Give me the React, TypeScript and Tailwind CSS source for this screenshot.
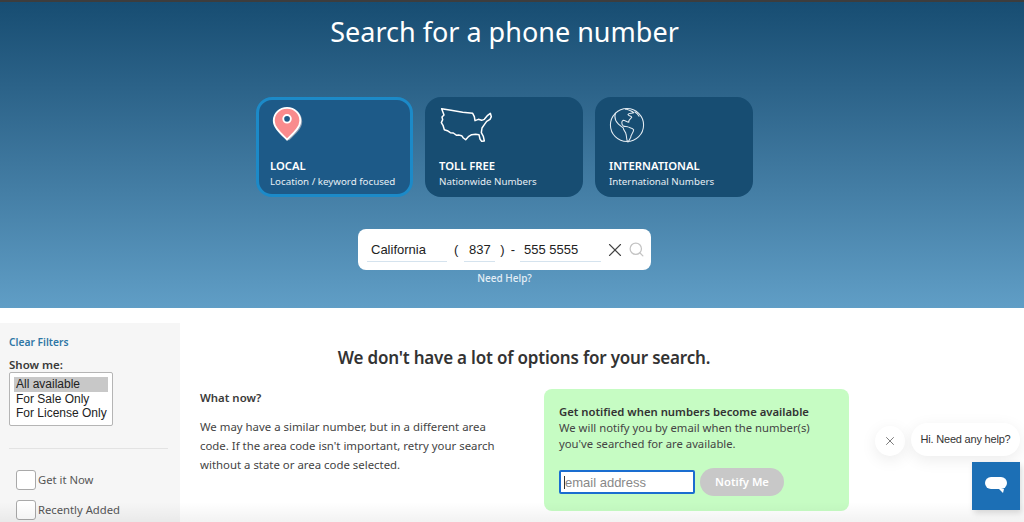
import { Search, X } from "lucide-react";

const sans = "font-['Noto_Sans',sans-serif]";
const arial = "font-['Liberation_Sans',Arial,sans-serif]";

const PinIcon = () => (
  <svg width="34" height="36" viewBox="0 0 34 38" className="ml-[1px]">
    <path d="M18 3c8 0 14 6 14 13.500 0 7-7 13-14 20-7-7-14-13-14-20C4 9 10 3 18 3z" fill="#8a9bb0" />
    <path
      d="M16 2c8 0 14 6 14 13.500 0 7-7 13-14 20-7-7-14-13-14-20C2 8 8 2 16 2z"
      fill="#f98b8d"
      stroke="#fff"
      strokeWidth="2"
    />
    <circle cx="16" cy="13.500" r="4" fill="#1d5a88" stroke="#fff" strokeWidth="2" />
  </svg>
);

const UsaIcon = () => (
  <svg width="60" height="38" viewBox="20 30 180 114" fill="none" className="-ml-[4px]">
    <path
      d="M40 38l28 5 35 6 30 3 5 10 2 12 10-4 10 3 8-3 10-12 8-6 3 10-4 8-10 6-7 10-7 10-2 14 6 11 3 14-8 1-5-7-3-13-10-1-12 1-10 6-8 9-7-5-5-7-9-2-6 1-10-7-9-1-9-6-9-3-4-13-5-8 4-9-2-8 6-6z"
      stroke="#fff"
      strokeWidth="4.500"
      strokeLinejoin="round"
    />
  </svg>
);

const GlobeIcon = () => (
  <svg width="36" height="36" viewBox="0 0 38 38" fill="none" stroke="#e4ecf2" strokeWidth="1.100" strokeLinejoin="round" className="mt-[1px]">
    <circle cx="19" cy="19" r="17.500" />
    <path d="M17 2c3 1 7 2 9 4-2 1-5 0-6 2 1 2 4 1 4 3-2 2-4 3-3 5-2 0-4-2-6-2-2 1-2 4 0 6 2 1 4 0 5 1 2 1 5 1 6 3 0 3-3 5-3 8-1 2-2 4-3 5-2-2-1-5-2-8 0-3-3-4-3-7-3-2-6-4-8-8-1-3-1-6 0-8" />
    <path d="M27 5c2 1 4 3 5 5" />
  </svg>
);

const ChoiceCard = ({
  title,
  sub,
  icon,
  active,
}: {
  title: string;
  sub: string;
  icon: React.ReactNode;
  active?: boolean;
}) => (
  <div
    className={
      active
        ? "flex h-[100px] w-[157px] flex-col rounded-2xl border-[3px] border-[#1c8ac8] bg-[#1d5a88] px-[11px] pt-[6px] text-white"
        : "flex h-[100px] w-[158px] flex-col rounded-2xl bg-[#174d72] px-[14px] pt-[9px] text-white"
    }
  >
    <div className="h-[52px]">{icon}</div>
    <div className="text-[11.250px] leading-[16px] font-semibold">{title}</div>
    <div className="text-[9.750px] leading-[15px] text-[#e6eef4]">{sub}</div>
  </div>
);

export default function App() {
  return (
    <div className={`relative h-[522px] w-[1024px] overflow-hidden bg-white ${sans} text-[#3a3a3a]`}>
      {/* hero */}
      <section className="flex h-[308px] flex-col items-center border-t-2 border-[#3d3d3d] bg-gradient-to-b from-[#174d72] to-[#609ec6] pr-[15px]">
        <h1 className="mt-[11px] h-[84px] text-[27px] leading-[38px] text-white">Search for a phone number</h1>
        <div className="flex gap-[12px]">
          <ChoiceCard active title="LOCAL" sub="Location / keyword focused" icon={<PinIcon />} />
          <ChoiceCard title="TOLL FREE" sub="Nationwide Numbers" icon={<UsaIcon />} />
          <ChoiceCard title="INTERNATIONAL" sub="International Numbers" icon={<GlobeIcon />} />
        </div>

        <div className={`mt-[32px] flex h-[41px] w-[293px] items-center rounded-lg bg-white pl-[9px] text-[13px] text-[#222] ${arial}`}>
          <input readOnly value="California" className="h-[25px] w-[80px] border-b border-[#d5e3ee] pl-[4px] outline-none" />
          <span className="ml-[7px]">(</span>
          <input readOnly value="837" className="ml-[6px] h-[25px] w-[31px] border-b border-[#d5e3ee] text-center outline-none" />
          <span className="ml-[5px]">)</span>
          <span className="ml-[6px]">-</span>
          <input readOnly value="555 5555" className="ml-[5px] h-[25px] w-[81px] border-b border-[#d5e3ee] pl-[4px] outline-none" />
          <X size={22} strokeWidth={1.200} className="ml-[3px] text-[#444]" />
          <Search size={17} strokeWidth={1.800} className="ml-[2px] text-[#c4c4c4]" />
        </div>
        <a className="mt-[1px] text-[10px] leading-[14px] font-medium text-[#e3eef6]">Need Help?</a>
      </section>

      <div className="flex">
        {/* filters */}
        <aside className="mt-[15px] h-[199px] w-[180px] bg-[#f6f6f6] pt-[11px] pl-[9px]">
          <a className="block text-[10.250px] leading-[16px] font-semibold text-[#2f77a5]">Clear Filters</a>
          <div className="mt-[7px] text-[11.500px] leading-[16px] font-semibold">Show me:</div>
          <div className={`-mt-[1px] h-[54px] w-[104px] rounded-[2px] border border-[#b5b5b5] bg-white px-[4px] pt-[4px] text-[12px] leading-[14.500px] text-[#222] ${arial}`}>
            <div className="bg-[#c8c8c8] pl-[2px]">All available</div>
            <div className="pl-[2px]">For Sale Only</div>
            <div className="whitespace-nowrap pl-[2px]">For License Only</div>
          </div>
          <hr className="mt-[22px] w-[159px] border-[#e3e3e3]" />
          <div className="mt-[21px] flex items-center gap-[2px] pl-[7px] text-[11.250px] text-[#555]">
            <span className="h-[20px] w-[20px] rounded-[3px] border border-[#a9a9a9] bg-white" />
            Get it Now
          </div>
          <div className="mt-[10px] flex items-center gap-[2px] pl-[7px] text-[11.250px] text-[#555]">
            <span className="h-[20px] w-[20px] rounded-[3px] border border-[#a9a9a9] bg-white" />
            Recently Added
          </div>
        </aside>

        {/* results */}
        <main className="flex-1 pt-[37px]">
          <h2 className="w-[688px] text-center text-[17px] leading-[26px] font-semibold tracking-[-0.2px] text-[#333]">
            We don't have a lot of options for your search.
          </h2>
          <div className="mt-[18px] flex">
            <div className="ml-[20px] w-[300px] text-[11.400px]">
              <div className="-mt-[1px] leading-[20px] font-semibold">What now?</div>
              <p className="mt-[9px] leading-[19px] text-[#444]">
                We may have a similar number, but in a different area code. If the area code isn't important, retry your search without a state or area code selected.
              </p>
            </div>
            <div className="ml-[44px] h-[122px] w-[305px] rounded-lg bg-[#c6fcc3] px-[15px] pt-[15px] text-[11.300px] leading-[16px]">
              <div className="font-semibold text-[#333]">Get notified when numbers become available</div>
              <p className="w-[280px] text-[#444]">We will notify you by email when the number(s) you've searched for are available.</p>
              <div className="mt-[16px] flex items-center gap-[5px]">
                <div className="relative">
                  <input
                    readOnly
                    placeholder="email address"
                    className={`h-[24px] w-[136px] rounded-[2px] border-2 border-[#1a6dd0] bg-white pl-[4px] text-[13px] text-[#777] outline-none placeholder:text-[#888] ${arial}`}
                  />
                  <span className="absolute top-[6px] left-[5px] h-[13px] w-px bg-[#333]" />
                </div>
                <button className="h-[28px] w-[84px] rounded-full bg-[#c8c8c8] text-[11.250px] font-semibold text-white">Notify Me</button>
              </div>
            </div>
          </div>
        </main>
      </div>

      {/* bottom fade */}
      <div className="absolute right-0 bottom-0 left-0 h-[20px] bg-gradient-to-b from-transparent to-black/5" />

      {/* chat widget */}
      <div className="absolute top-[426px] left-[875px] flex h-[30px] w-[30px] items-center justify-center rounded-full bg-white shadow-[0_4px_16px_rgba(0,0,0,0.08)]">
        <X size={14} strokeWidth={1.200} className="text-[#444]" />
      </div>
      <div className={`absolute top-[423px] left-[911px] flex h-[33px] w-[109px] items-center justify-center rounded-full bg-white text-[11px] tracking-[-0.2px] text-[#333] shadow-[0_4px_16px_rgba(0,0,0,0.08)] ${arial}`}>
        Hi. Need any help?
      </div>
      <div className="absolute top-[462px] left-[972px] flex h-[48px] w-[48px] items-center justify-center bg-[#1c6fb5] shadow-[2px_3px_6px_rgba(0,0,0,0.15)]">
        <svg width="24" height="20" viewBox="0 0 24 20">
          <rect x="1" y="1" width="22" height="12" rx="6" fill="#fff" />
          <path d="M15 13h5l-1 4z" fill="#fff" />
        </svg>
      </div>
    </div>
  );
}
